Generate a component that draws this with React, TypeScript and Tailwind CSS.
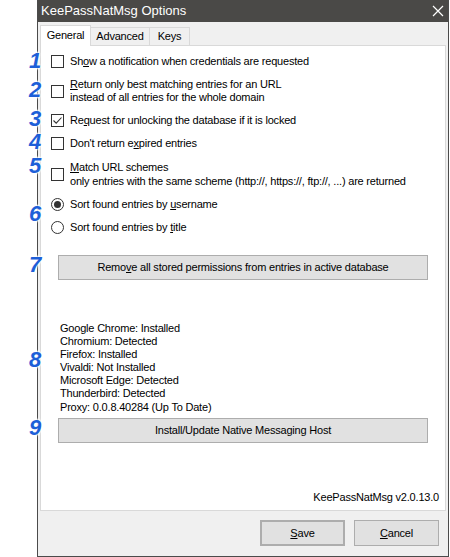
import React from "react";

const FONT = "font-['Liberation_Sans',Arial,sans-serif]";

const MARKERS = [
  { n: "1", top: 51 },
  { n: "2", top: 80 },
  { n: "3", top: 109 },
  { n: "4", top: 132 },
  { n: "5", top: 156 },
  { n: "6", top: 204 },
  { n: "7", top: 255 },
  { n: "8", top: 350 },
  { n: "9", top: 418 },
];

const BROWSERS = [
  "Google Chrome: Installed",
  "Chromium: Detected",
  "Firefox: Installed",
  "Vivaldi: Not Installed",
  "Microsoft Edge: Detected",
  "Thunderbird: Detected",
  "Proxy: 0.0.8.40284 (Up To Date)",
];

function Checkbox({ checked = false }: { checked?: boolean }) {
  return (
    <span className="flex h-[13px] w-[13px] shrink-0 items-center justify-center border border-[#333] bg-white">
      {checked && (
        <svg width="11" height="11" viewBox="0 0 11 11">
          <path d="M1.5 5.5 L4.2 8.2 L9.5 2.5" fill="none" stroke="#333" strokeWidth="1.1" />
        </svg>
      )}
    </span>
  );
}

function Radio({ checked = false }: { checked?: boolean }) {
  return (
    <span className="flex h-[13px] w-[13px] shrink-0 items-center justify-center rounded-full border border-[#333] bg-white">
      {checked && <span className="h-[7px] w-[7px] rounded-full bg-[#333]" />}
    </span>
  );
}

function Row({ control, children }: { control: React.ReactNode; children: React.ReactNode }) {
  return (
    <div className="flex items-center gap-[6px] pl-[10px]">
      {control}
      <div className="leading-[13px]">{children}</div>
    </div>
  );
}

function WinButton({ children, className = "" }: { children: React.ReactNode; className?: string }) {
  return (
    <div className={`flex items-center justify-center border border-[#adadad] bg-[#e1e1e1] ${className}`}>
      {children}
    </div>
  );
}

export default function App() {
  return (
    <div className={`relative h-[557px] w-[450px] overflow-hidden bg-white text-[11px] tracking-[-0.2px] text-black ${FONT}`}>
      <div className="ml-[37px] flex h-[557px] w-[412px] flex-col border border-t-0 border-[#4b4b4b] bg-[#f0f0f0]">
        {/* title bar */}
        <div className="flex h-[22px] shrink-0 items-center justify-between bg-[#4a4947] pl-[3px] pr-[4px] text-[13px] tracking-normal text-white">
          <span>KeePassNatMsg Options</span>
          <svg width="12" height="12" viewBox="0 0 12 12">
            <path d="M1 1 L11 11 M11 1 L1 11" stroke="#fff" strokeWidth="1.2" />
          </svg>
        </div>

        {/* tabs */}
        <div className="flex h-[23px] items-end pl-[2px]">
          <div className="relative z-10 -mb-px flex h-[21px] w-[51px] items-center justify-center border border-b-0 border-[#d9d9d9] bg-white pb-[1px]">
            General
          </div>
          <div className="flex h-[18px] w-[59px] items-center justify-center border border-l-0 border-b-0 border-[#d9d9d9]">
            Advanced
          </div>
          <div className="flex h-[18px] w-[40px] items-center justify-center border border-l-0 border-b-0 border-[#d9d9d9]">
            Keys
          </div>
        </div>

        {/* tab panel */}
        <div className="ml-[2px] mr-[2px] flex h-[466px] flex-col border border-[#d9d9d9] bg-white pt-[9px]">
          <Row control={<Checkbox />}>
            Sh<u>o</u>w a notification when credentials are requested
          </Row>
          <div className="mt-[10px]">
            <Row control={<Checkbox />}>
              <u>R</u>eturn only best matching entries for an URL
              <br />
              instead of all entries for the whole domain
            </Row>
          </div>
          <div className="mt-[10px]">
            <Row control={<Checkbox checked />}>
              Re<u>q</u>uest for unlocking the database if it is locked
            </Row>
          </div>
          <div className="mt-[10px]">
            <Row control={<Checkbox />}>
              Don't return e<u>x</u>pired entries
            </Row>
          </div>
          <div className="mt-[10px]">
            <Row control={<Checkbox />}>
              <div className="leading-[14px]">
                <u>M</u>atch URL schemes
                <br />
                only entries with the same scheme (http://, https://, ftp://, ...) are returned
              </div>
            </Row>
          </div>
          <div className="mt-[10px]">
            <Row control={<Radio checked />}>
              Sort found entries by <u>u</u>sername
            </Row>
          </div>
          <div className="mt-[10px]">
            <Row control={<Radio />}>
              Sort found entries by <u>t</u>itle
            </Row>
          </div>

          <WinButton className="ml-[17px] mt-[21px] h-[25px] w-[370px]">
            Remo<u>v</u>e all stored permissions from entries in active database
          </WinButton>

          <div className="ml-[19px] mt-[42px] flex flex-col leading-[13.1px]">
            {BROWSERS.map((b) => (
              <span key={b}>{b}</span>
            ))}
          </div>

          <WinButton className="ml-[17px] mt-[4px] h-[25px] w-[370px]">
            Install/Update Native Messaging Host
          </WinButton>

          <div className="mr-[6px] mt-auto mb-[5px] self-end">KeePassNatMsg v2.0.13.0</div>
        </div>

        {/* footer */}
        <div className="mr-[9px] mt-[9px] flex justify-end gap-[9px]">
          <WinButton className="h-[26px] w-[85px] border-2 border-[#0078d7]">
            <u>S</u>ave
          </WinButton>
          <WinButton className="h-[26px] w-[85px]">
            <u>C</u>ancel
          </WinButton>
        </div>
      </div>

      {/* annotation numbers over the window edge */}
      {MARKERS.map((m) => (
        <span
          key={m.n}
          className="absolute left-[29px] font-['Liberation_Sans',Arial,sans-serif] text-[22px] font-bold italic leading-[20px] tracking-normal text-[#1d5fd8] [text-shadow:0_0_2px_#fff,0_0_2px_#fff,0_0_3px_#fff,0_0_3px_#fff]"
          style={{ top: m.top }}
        >
          {m.n}
        </span>
      ))}
    </div>
  );
}
